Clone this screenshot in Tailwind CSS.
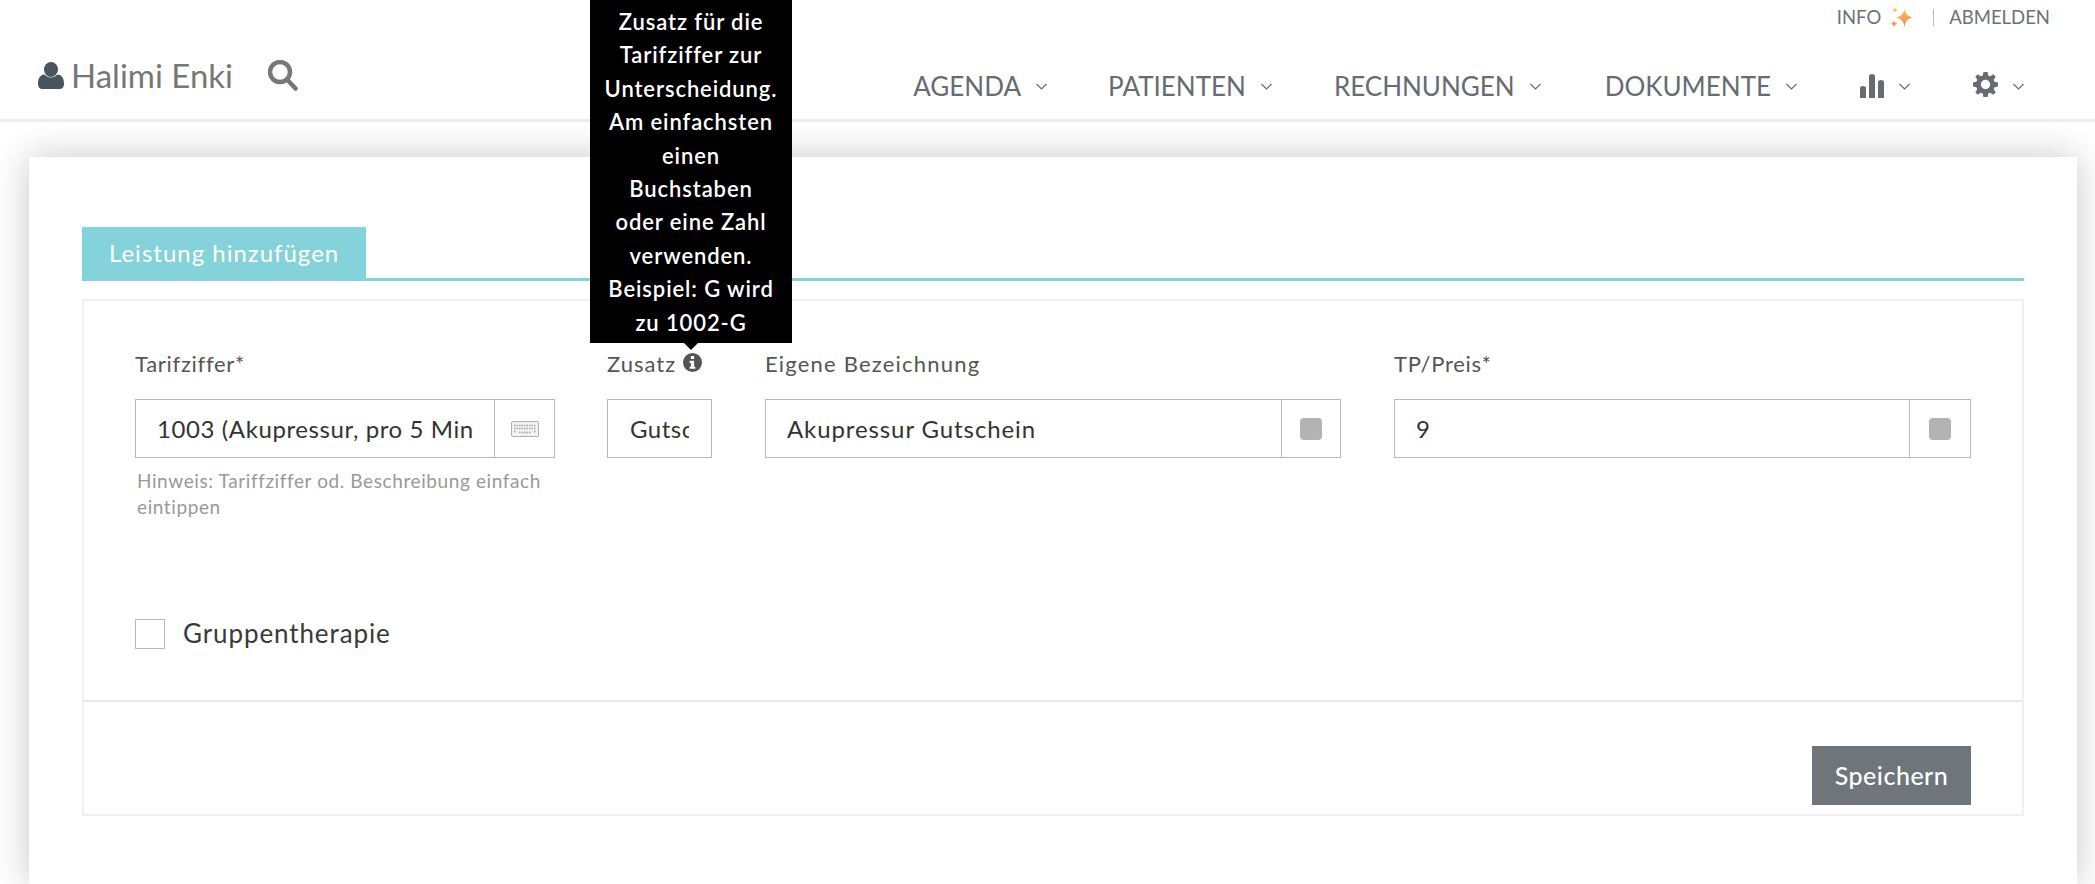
<!DOCTYPE html>
<html lang="de">
<head>
  <meta charset="UTF-8" />
  <title>Leistung hinzufügen</title>
  <script src="https://cdn.jsdelivr.net/npm/@tailwindcss/browser@4"></script>
</head>
<body class="bg-white h-[884px] overflow-hidden font-['Lato',sans-serif] text-[#555]">

  <!-- Header -->
  <header class="h-[122px] border-b-[3px] border-[#eee] flex justify-between pl-[38px] pr-[45px]">
    <div class="flex items-center gap-[7px] h-[150px] text-[#777]">
      <svg class="w-[26px] h-[27px] text-[#48555c]" viewBox="0 0 26 27" fill="currentColor"><ellipse cx="13" cy="7.500" rx="7" ry="7.500"/><path d="M0 22c0-6 2-9 6.500-9.500 2 2 4 3 6.500 3s4.500-1 6.500-3c4.500.5 6.500 3.500 6.500 9.500 0 3-2 5-4.500 5h-17C2 27 0 25 0 22z"/></svg>
      <span class="text-[33px] leading-none">Halimi Enki</span>
      <svg class="w-[30px] h-[31px] ml-[28px]" viewBox="0 0 30 31" fill="none" stroke="currentColor"><circle cx="12" cy="12" r="10" stroke-width="4.500"/><path d="M19.500 20l8 8.500" stroke-width="4.500" stroke-linecap="round"/></svg>
    </div>
    <div class="flex flex-col items-end">
      <div class="flex items-center h-[35px] text-[18.500px] text-[#6b7278]">
        <span>INFO</span>
        <svg class="w-[24px] h-[24px] ml-[9px]" viewBox="0 0 24 24"><defs><linearGradient id="st" x1="0" y1="0" x2="0" y2="1"><stop offset="0" stop-color="#f8c95c"/><stop offset="1" stop-color="#ee8a4a"/></linearGradient></defs><path fill="url(#st)" d="M14.500 3c1 5 3 7 8.500 8.500-5.500 1.500-7.500 3.500-8.500 9.500-1-6-3-8-8.500-9.500 5.500-1.500 7.500-3.500 8.500-8.500zM5 1c.5 2 1 2.500 3 3-2 .5-2.500 1-3 3-.5-2-1-2.500-3-3 2-.5 2.500-1 3-3zM4 14c.5 2.500 1.200 3.200 3.500 3.800-2.300.6-3 1.300-3.500 3.800-.5-2.500-1.200-3.200-3.500-3.800 2.300-.6 3-1.300 3.500-3.800z"/></svg>
        <span class="w-px h-[17px] bg-[#bbb] ml-[19px] mr-[15px]"></span>
        <span>ABMELDEN</span>
      </div>
      <nav class="flex items-center mt-[38px] text-[26px] leading-none text-[#666c72] pr-[26px]">
        <span>AGENDA</span>
        <svg class="w-[11px] h-[7px] ml-[15px]" viewBox="0 0 11 7" fill="none" stroke="currentColor" stroke-width="1.200"><path d="M.5 1l5 5 5-5"/></svg>
        <span class="ml-[61px]">PATIENTEN</span>
        <svg class="w-[11px] h-[7px] ml-[15px]" viewBox="0 0 11 7" fill="none" stroke="currentColor" stroke-width="1.200"><path d="M.5 1l5 5 5-5"/></svg>
        <span class="ml-[62px]">RECHNUNGEN</span>
        <svg class="w-[11px] h-[7px] ml-[15px]" viewBox="0 0 11 7" fill="none" stroke="currentColor" stroke-width="1.200"><path d="M.5 1l5 5 5-5"/></svg>
        <span class="ml-[64px]">DOKUMENTE</span>
        <svg class="w-[11px] h-[7px] ml-[15px]" viewBox="0 0 11 7" fill="none" stroke="currentColor" stroke-width="1.200"><path d="M.5 1l5 5 5-5"/></svg>
        <svg class="w-[24px] h-[24px] ml-[63px]" viewBox="0 0 24 24" fill="currentColor"><path d="M0 14c0-1 1-2 3-2s3 1 3 2v10H0zM9 2c0-1 1-2 3-2s3 1 3 2v22H9zM18 8c0-1 1-2 3-2s3 1 3 2v16h-6z"/></svg>
        <svg class="w-[11px] h-[7px] ml-[15px]" viewBox="0 0 11 7" fill="none" stroke="currentColor" stroke-width="1.200"><path d="M.5 1l5 5 5-5"/></svg>
        <svg class="w-[25px] h-[25px] ml-[63px] -mt-[3px]" viewBox="0 0 24 24" fill="currentColor"><path fill-rule="evenodd" d="M10 0h4l.6 3.300 2 .8L19.400 2.200l2.400 2.400-1.900 2.800.8 2L24 10v4l-3.300.6-.8 2 1.900 2.800-2.400 2.400-2.800-1.900-2 .8L14 24h-4l-.6-3.300-2-.8-2.800 1.900-2.400-2.400 1.900-2.800-.8-2L0 14v-4l3.300-.6.8-2L2.200 4.600l2.400-2.400 2.800 1.900 2-.8zM12 7.500a4.500 4.500 0 1 0 0 9 4.500 4.500 0 0 0 0-9z"/></svg>
        <svg class="w-[11px] h-[7px] ml-[15px]" viewBox="0 0 11 7" fill="none" stroke="currentColor" stroke-width="1.200"><path d="M.5 1l5 5 5-5"/></svg>
      </nav>
    </div>
  </header>

  <main class="pl-[29px] pr-[18px] pt-[35px]">
    <section class="bg-white shadow-[0_0_35px_rgba(0,0,0,0.22)] h-[727px] px-[53px] pt-[70px]">
      <!-- Tab -->
      <div class="border-b-[3px] border-[#84d3da] h-[54px]">
        <div class="bg-[#84d3da] w-[284px] h-[54px] pl-[27px] text-white text-[24px] tracking-[1px] leading-[52px]">Leistung hinzufügen</div>
      </div>

      <div class="mt-[18px] border-2 border-[#f0f0f0] h-[517px]">
        <div class="h-[401px] border-b-2 border-[#e8e8e8] pl-[51px] pr-[51px] pt-[46px]">
          <div class="flex">
            <div class="w-[420px] mr-[52px]">
              <div class="h-[52px] text-[22px] tracking-[.7px]">Tarifziffer*</div>
              <div class="flex h-[59px] border border-[#b8b8b8]">
                <div class="flex-1 pl-[21px] text-[24px] tracking-[.6px] leading-[57px] text-[#333] overflow-hidden whitespace-nowrap">1003 (Akupressur, pro 5 Min</div>
                <div class="w-[60px] border-l border-[#b8b8b8] flex items-center justify-center">
                  <svg class="w-[28px] h-[16px]" viewBox="0 0 28 16"><rect x=".5" y=".5" width="27" height="15" rx="1.500" fill="#f2f2f2" stroke="#b0b0b0"/><path d="M3 4.500h22M3 7.500h22M3 10.500h2.500M23 10.500h2.500M8 11.500h12" stroke="#a8a8a8" stroke-width="1.500" stroke-dasharray="1.500 1"/></svg>
                </div>
              </div>
              <p class="mt-[10px] ml-[2px] text-[19px] tracking-[.6px] leading-[26px] text-[#999]">Hinweis: Tariffziffer od. Beschreibung einfach eintippen</p>
            </div>

            <div class="w-[105px] mr-[53px]">
              <div class="relative h-[52px] text-[22px] tracking-[1px] flex items-start gap-[7px] whitespace-nowrap">
                <span>Zusatz</span>
                <svg class="w-[19px] h-[19px] mt-[6px] text-[#555]" viewBox="0 0 20 20" fill="currentColor"><path fill-rule="evenodd" d="M10 0a10 10 0 1 1 0 20 10 10 0 0 1 0-20zM8.300 3.200v3h3.400v-3zM7 8.200v2.200h1.300v4H7v2.300h6v-2.300h-1.300V8.200z"/></svg>
                <!-- Tooltip -->
                <div class="absolute left-[-17px] bottom-[56px] w-[202px] bg-black text-white text-center font-semibold text-[22px] tracking-[.9px] leading-[33.400px] px-[10px] pt-[5px] pb-[4px] whitespace-normal">
                  Zusatz für die Tarifziffer zur Unterscheidung. Am einfachsten einen Buchstaben<br>oder eine Zahl verwenden. Beispiel: G wird zu 1002-G
                  <span class="absolute left-1/2 -translate-x-1/2 top-full border-x-[7px] border-x-transparent border-t-[7px] border-t-black"></span>
                </div>
              </div>
              <div class="h-[59px] border border-[#b8b8b8] px-[22px]">
                <div class="overflow-hidden whitespace-nowrap text-[24px] tracking-[.5px] leading-[57px] text-[#333]">Gutschein</div>
              </div>
            </div>

            <div class="w-[576px] mr-[53px]">
              <div class="h-[52px] text-[22px] tracking-[1.200px]">Eigene Bezeichnung</div>
              <div class="flex h-[59px] border border-[#b8b8b8]">
                <div class="flex-1 pl-[21px] text-[24px] tracking-[.9px] leading-[57px] text-[#333]">Akupressur Gutschein</div>
                <div class="w-[59px] border-l border-[#b8b8b8] flex items-center justify-center">
                  <span class="w-[22px] h-[22px] rounded bg-[#b3b3b3]"></span>
                </div>
              </div>
            </div>

            <div class="w-[577px]">
              <div class="h-[52px] text-[22px] tracking-[.7px]">TP/Preis*</div>
              <div class="flex h-[59px] border border-[#b8b8b8]">
                <div class="flex-1 pl-[21px] text-[24px] tracking-[.5px] leading-[57px] text-[#333]">9</div>
                <div class="w-[61px] border-l border-[#b8b8b8] flex items-center justify-center">
                  <span class="w-[22px] h-[22px] rounded bg-[#b3b3b3]"></span>
                </div>
              </div>
            </div>
          </div>

          <label class="flex items-center gap-[18px] mt-[94px]">
            <span class="w-[30px] h-[30px] border border-[#b8b8b8]"></span>
            <span class="text-[26px] tracking-[.9px] text-[#3a3a3a]">Gruppentherapie</span>
          </label>
        </div>
        <div class="flex justify-end pr-[51px] pt-[44px]">
          <button class="w-[159px] h-[59px] bg-[#6e767b] text-white text-[25px] tracking-[.5px] font-medium">Speichern</button>
        </div>
      </div>
    </section>
  </main>
</body>
</html>
